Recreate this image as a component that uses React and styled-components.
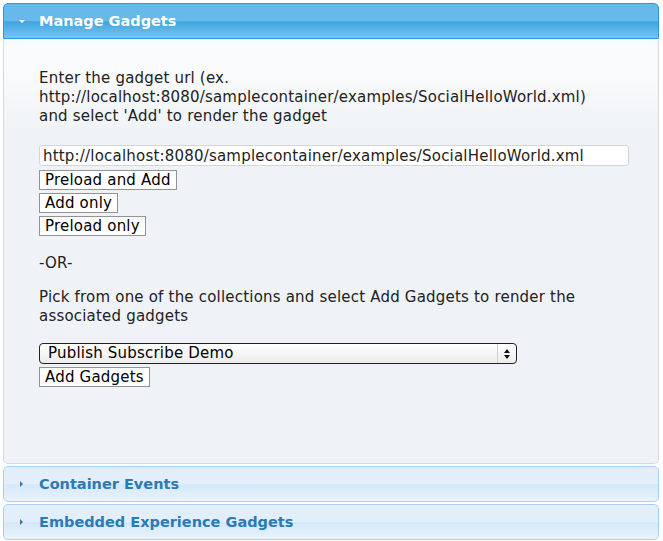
import React from 'react';
import styled, { createGlobalStyle } from 'styled-components';

const Global = createGlobalStyle`
  body {
    margin: 0;
    background: #ffffff;
    font-family: "DejaVu Sans", "Liberation Sans", sans-serif;
  }
`;

const Accordion = styled.div`
  padding: 3px 4px 0 3px;
  display: flex;
  flex-direction: column;
  gap: 2px;
`;

const Header = styled.div`
  height: 34px;
  display: flex;
  align-items: center;
  border: 1px solid ${p => (p.active ? '#2a98e5' : '#a9d0f0')};
  border-radius: ${p => (p.active ? '5px 5px 0 0' : '5px')};
  background: ${p =>
    p.active
      ? 'linear-gradient(to bottom, #66b9e8 0%, #66b9e8 50%, #3ea6e0 52%, #78c3ee 100%)'
      : 'linear-gradient(to bottom, #e2effa 0%, #e2effa 50%, #d3e8f8 52%, #e9f3fc 100%)'};
  color: ${p => (p.active ? '#ffffff' : '#2b7ab5')};
  font-weight: bold;
  font-size: 14.5px;
`;

const Arrow = styled.span`
  width: 35px;
  display: flex;
  justify-content: center;
  svg { display: block; }
`;

const Panel = styled.div`
  border: 1px solid #d6d9dd;
  border-top: none;
  border-radius: 0 0 5px 5px;
  background: linear-gradient(to bottom, #f9fafb 0%, #f9fafb 8%, #eff3f7 22%, #eff3f7 100%);
  height: 425px;
  padding: 30px 0 0 35px;
  box-sizing: border-box;
  color: #222;
  font-size: 15px;
  letter-spacing: 0.2px;
  line-height: 19px;
`;

const Para = styled.p`
  margin: ${p => p.top || 0}px 0 ${p => p.gap || 0}px 0;
`;

const UrlInput = styled.input`
  width: 590px;
  height: 21px;
  box-sizing: border-box;
  border: 1px solid #d2d5d9;
  border-radius: 3px;
  background: #fff;
  font-family: inherit;
  font-size: 15px;
  letter-spacing: 0.2px;
  color: #222;
  padding: 0 3px;
  margin: 0 0 4px 0;
  display: block;
`;

const Stack = styled.div`
  display: flex;
  flex-direction: column;
  align-items: flex-start;
  gap: 3px;
`;

const Button = styled.button`
  height: 20px;
  border: 1px solid #939393;
  background: #fff;
  font-family: inherit;
  font-size: 15px;
  letter-spacing: 0.2px;
  color: #000;
  padding: 0 5px;
  line-height: 18px;
  border-radius: 0;
`;

const Select = styled.div`
  width: 478px;
  height: 21px;
  box-sizing: border-box;
  border: 1px solid #222;
  border-radius: 4px;
  background: linear-gradient(to bottom, #ffffff, #ececec);
  display: flex;
  align-items: center;
  justify-content: space-between;
  font-size: 15px;
  color: #000;
  padding-left: 8px;
  margin-bottom: 3px;
`;

const Spinner = styled.div`
  width: 18px;
  height: 100%;
  border-left: 1px solid #cfcfcf;
  display: flex;
  align-items: center;
  justify-content: center;
`;

const Down = ({ color }) => (
  <svg width="8" height="5" viewBox="0 0 8 5"><path d="M1 1h6L4 4z" fill={color} /></svg>
);

const Right = ({ color }) => (
  <svg width="5" height="8" viewBox="0 0 5 8"><path d="M1 1v6l3-3z" fill={color} /></svg>
);

export default function App() {
  return (
    <>
      <Global />
      <Accordion>
        <div>
          <Header active>
            <Arrow><Down color="#ffffff" /></Arrow>
            Manage Gadgets
          </Header>
          <Panel>
            <Para gap={19}>
              Enter the gadget url (ex.<br />
              http://localhost:8080/samplecontainer/examples/SocialHelloWorld.xml)<br />
              and select 'Add' to render the gadget
            </Para>
            <UrlInput defaultValue="http://localhost:8080/samplecontainer/examples/SocialHelloWorld.xml" />
            <Stack>
              <Button>Preload and Add</Button>
              <Button>Add only</Button>
              <Button>Preload only</Button>
            </Stack>
            <Para top={18} gap={15}>-OR-</Para>
            <Para gap={17}>
              Pick from one of the collections and select Add Gadgets to render the<br />
              associated gadgets
            </Para>
            <Select>
              Publish Subscribe Demo
              <Spinner>
                <svg width="8" height="12" viewBox="0 0 8 12">
                  <path d="M4 1l3 4H1z M4 11L1 7h6z" fill="#111" />
                </svg>
              </Spinner>
            </Select>
            <Button>Add Gadgets</Button>
          </Panel>
        </div>
        <Header>
          <Arrow><Right color="#2b7ab5" /></Arrow>
          Container Events
        </Header>
        <Header>
          <Arrow><Right color="#2b7ab5" /></Arrow>
          Embedded Experience Gadgets
        </Header>
      </Accordion>
    </>
  );
}
